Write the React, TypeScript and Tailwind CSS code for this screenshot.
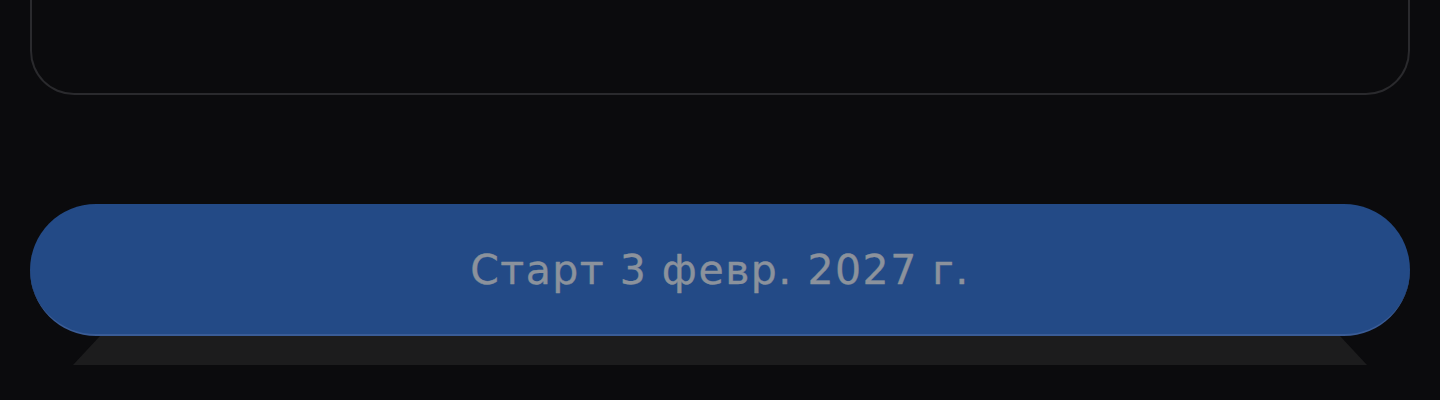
export default function App() {
  return (
    <div className="flex h-[400px] w-full flex-col overflow-hidden bg-[#0b0b0d] px-[30px] font-['DejaVu_Sans',sans-serif]">
      {/* top card, only its lower part is visible */}
      <div className="h-[95px] w-full shrink-0 rounded-b-[44px] border-x-2 border-b-2 border-[#2a2a2d] bg-[#0b0b0d]" />

      <button
        type="button"
        className="mt-[109px] flex h-[132px] w-full shrink-0 items-center justify-center rounded-full border-b-2 border-[#3a5c96] bg-[#234a86] pt-[4px] text-[41px] font-normal tracking-[1.5px] text-[#8b929c] [-webkit-text-stroke:0.4px_#8b929c]"
      >
        Старт 3 февр. 2027 г.
      </button>

      {/* the next element peeking out below */}
      <div className="mx-[43px] h-[29px] shrink-0 bg-[#1c1c1d] [clip-path:polygon(27px_0,calc(100%-27px)_0,100%_100%,0_100%)]" />
    </div>
  );
}
